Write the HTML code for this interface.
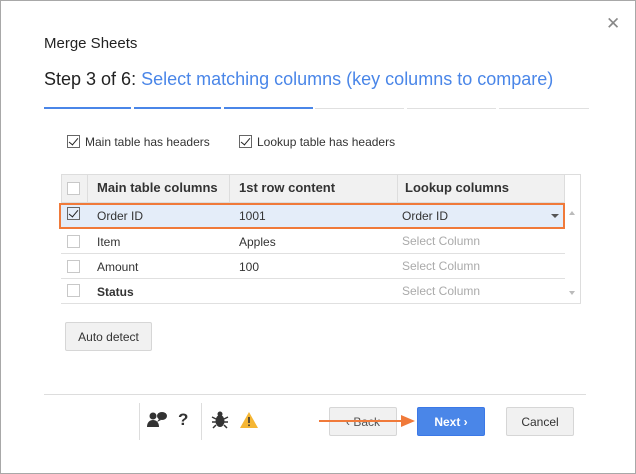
<!DOCTYPE html>
<html><head><style>
*{box-sizing:border-box;margin:0;padding:0}
body{width:636px;height:474px;background:#fff;font-family:"Liberation Sans",Arial,sans-serif;position:relative;overflow:hidden;border:1px solid #a8a8a8}
.a{position:absolute}
.cb{position:absolute;width:13px;height:13px;border:1px solid #c8c8c8;background:#fff}
.cb.on{border-color:#666}
.cb.on::after{content:"";position:absolute;left:3px;top:0px;width:4px;height:8px;border:solid #222;border-width:0 1.5px 1.5px 0;transform:rotate(40deg)}
.t{font-size:12px;color:#333}
.btn{position:absolute;border:1px solid #d6d6d6;background:#f1f1f1;border-radius:2px;font-size:12px;color:#333;text-align:center}
.hline{position:absolute;height:1px;background:#e0e0e0}
</style></head><body>
<div class="a" style="left:605px;top:13px;font-size:17px;color:#888">✕</div>
<div class="a" style="left:43px;top:34px;font-size:15px;color:#222">Merge Sheets</div>
<div class="a" style="left:43px;top:68px;font-size:18px;color:#222">Step 3 of 6: <span style="color:#4a86e8">Select matching columns (key columns to compare)</span></div>
<div class="a" style="left:43px;top:106px;width:87px;height:2px;background:#4a86e8"></div>
<div class="a" style="left:133px;top:106px;width:87px;height:2px;background:#4a86e8"></div>
<div class="a" style="left:223px;top:106px;width:89px;height:2px;background:#4a86e8"></div>
<div class="a" style="left:314px;top:107px;width:89px;height:1px;background:#e0e0e0"></div>
<div class="a" style="left:406px;top:107px;width:89px;height:1px;background:#e0e0e0"></div>
<div class="a" style="left:498px;top:107px;width:90px;height:1px;background:#e0e0e0"></div>

<div class="cb on" style="left:66px;top:134px"></div>
<div class="a t" style="left:84px;top:134px">Main table has headers</div>
<div class="cb on" style="left:238px;top:134px"></div>
<div class="a t" style="left:256px;top:134px">Lookup table has headers</div>

<div class="a" style="left:60px;top:173px;width:504px;height:29px;background:#f1f1f1;border:1px solid #ddd"></div>
<div class="a" style="left:86px;top:174px;width:1px;height:27px;background:#ddd"></div>
<div class="a" style="left:228px;top:174px;width:1px;height:27px;background:#ddd"></div>
<div class="a" style="left:396px;top:174px;width:1px;height:27px;background:#ddd"></div>
<div class="a" style="left:564px;top:173px;width:16px;height:130px;border-right:1px solid #ddd;border-top:1px solid #ddd"></div>
<div class="cb" style="left:66px;top:181px"></div>
<div class="a" style="left:96px;top:179px;font-size:13px;font-weight:bold;color:#333">Main table columns</div>
<div class="a" style="left:238px;top:179px;font-size:13px;font-weight:bold;color:#333">1st row content</div>
<div class="a" style="left:404px;top:179px;font-size:13px;font-weight:bold;color:#333">Lookup columns</div>

<div class="a" style="left:58px;top:202px;width:506px;height:26px;background:#e4edf9;border:2px solid #f07a3a"></div>
<div class="cb on" style="left:66px;top:206px;background:transparent"></div>
<div class="a t" style="left:96px;top:208px">Order ID</div>
<div class="a t" style="left:238px;top:208px">1001</div>
<div class="a t" style="left:401px;top:208px">Order ID</div>
<div class="a" style="left:550px;top:213px;border:4px solid transparent;border-top:4px solid #555"></div>
<div class="a" style="left:568px;top:207px;border:3px solid transparent;border-bottom:4px solid #bbb"></div>
<div class="a" style="left:568px;top:290px;border:3px solid transparent;border-top:4px solid #bbb"></div>

<div class="cb" style="left:66px;top:234px"></div>
<div class="a t" style="left:96px;top:234px">Item</div>
<div class="a t" style="left:238px;top:234px">Apples</div>
<div class="a" style="left:401px;top:233px;font-size:12px;color:#aaa">Select Column</div>
<div class="hline" style="left:60px;top:252px;width:504px"></div>
<div class="cb" style="left:66px;top:259px"></div>
<div class="a t" style="left:96px;top:259px">Amount</div>
<div class="a t" style="left:238px;top:259px">100</div>
<div class="a" style="left:401px;top:258px;font-size:12px;color:#aaa">Select Column</div>
<div class="hline" style="left:60px;top:277px;width:504px"></div>
<div class="cb" style="left:66px;top:283px"></div>
<div class="a t" style="left:96px;top:284px;font-weight:bold">Status</div>
<div class="a" style="left:401px;top:283px;font-size:12px;color:#aaa">Select Column</div>
<div class="hline" style="left:60px;top:302px;width:520px"></div>

<div class="btn" style="left:64px;top:321px;width:87px;height:29px;line-height:29px">Auto detect</div>

<div class="a" style="left:43px;top:393px;width:542px;height:1px;background:#ddd"></div>
<div class="a" style="left:138px;top:402px;width:1px;height:37px;background:#ddd"></div>
<div class="a" style="left:200px;top:402px;width:1px;height:37px;background:#ddd"></div>
<svg class="a" style="left:146px;top:410px" width="22" height="18" viewBox="0 0 22 18"><circle cx="6" cy="5" r="3.5" fill="#333"/><path d="M0 16c0-5 3-7 6-7s6 2 6 7z" fill="#333"/><ellipse cx="15" cy="5" rx="5" ry="4" fill="#333"/><path d="M12 8l-2 3 4-2z" fill="#333"/></svg>
<div class="a" style="left:177px;top:409px;font-size:17px;font-weight:bold;color:#333">?</div>
<svg class="a" style="left:210px;top:410px" width="18" height="18" viewBox="0 0 18 18"><ellipse cx="9" cy="10" rx="4.5" ry="6" fill="#333"/><circle cx="9" cy="3" r="2.5" fill="#333"/><path d="M1 6l4 2M17 6l-4 2M1 11h4M17 11h-4M2 17l3-3M16 17l-3-3" stroke="#333" stroke-width="1.5"/></svg>
<svg class="a" style="left:238px;top:410px" width="20" height="18" viewBox="0 0 20 18"><path d="M10 1L19 17H1z" fill="#f5b634"/><rect x="9.2" y="6" width="1.6" height="6" fill="#333"/><rect x="9.2" y="13.5" width="1.6" height="1.6" fill="#333"/></svg>

<div class="btn" style="left:328px;top:406px;width:68px;height:29px;line-height:29px;color:#555">‹ Back</div>
<div class="btn" style="left:416px;top:406px;width:68px;height:29px;line-height:29px;background:#4a86e8;border-color:#3b78e7;color:#fff;font-weight:bold">Next ›</div>
<div class="btn" style="left:505px;top:406px;width:68px;height:29px;line-height:29px">Cancel</div>
<div class="a" style="left:318px;top:419px;width:88px;height:2px;background:#f07a3a"></div>
<div class="a" style="left:400px;top:414px;border-left:14px solid #f07a3a;border-top:6px solid transparent;border-bottom:6px solid transparent"></div>
</body></html>
